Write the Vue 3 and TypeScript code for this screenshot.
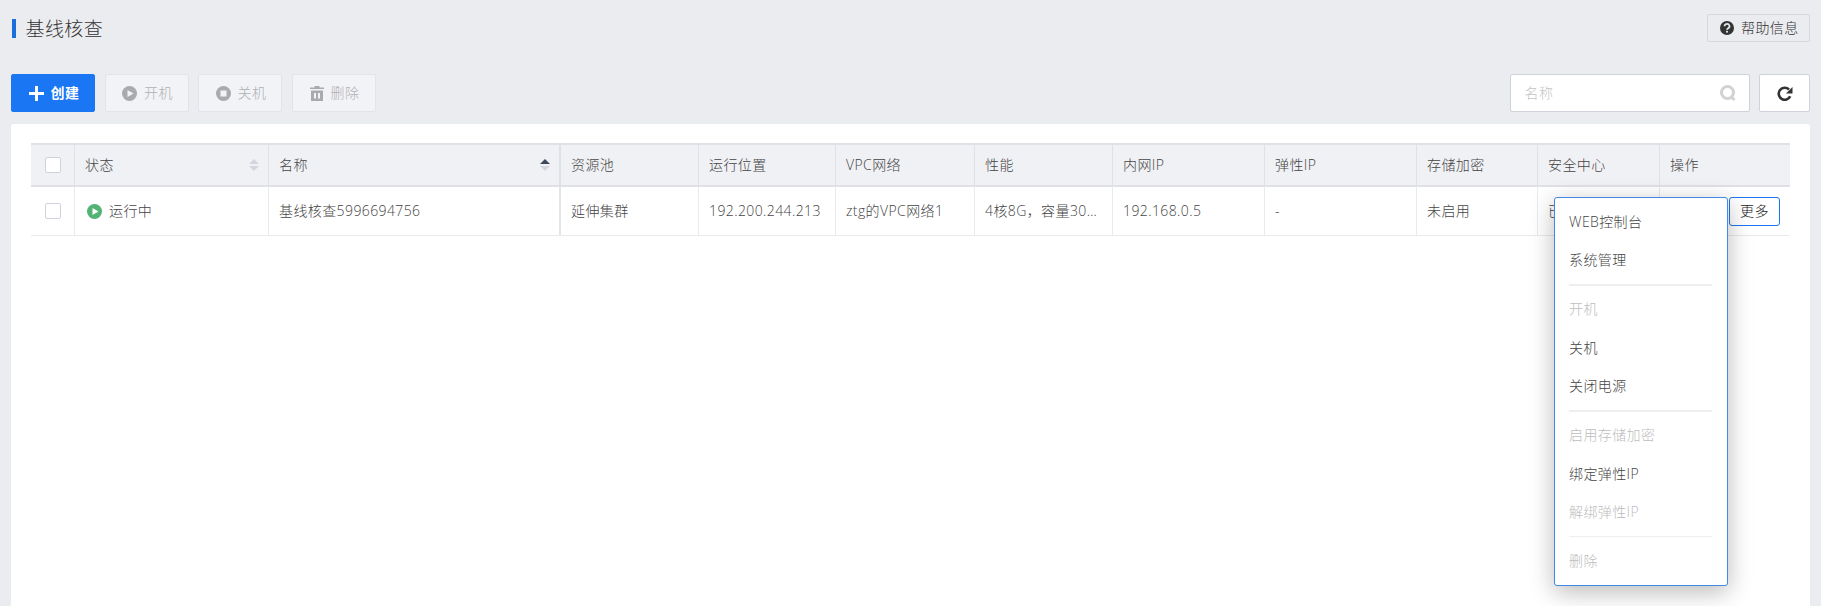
<script setup lang="ts">
interface Column { key: string; label: string; width: number; sort?: 'none' | 'asc'; heavy?: boolean }
const columns: Column[] = [
  { key: 'check', label: '', width: 44 },
  { key: 'status', label: '状态', width: 194, sort: 'none' },
  { key: 'name', label: '名称', width: 292, sort: 'asc', heavy: true },
  { key: 'pool', label: '资源池', width: 138 },
  { key: 'loc', label: '运行位置', width: 137 },
  { key: 'vpc', label: 'VPC网络', width: 139 },
  { key: 'perf', label: '性能', width: 138 },
  { key: 'ip', label: '内网IP', width: 152 },
  { key: 'eip', label: '弹性IP', width: 152 },
  { key: 'enc', label: '存储加密', width: 121 },
  { key: 'sec', label: '安全中心', width: 122 },
  { key: 'op', label: '操作', width: 130 }
]
const row: Record<string, string> = {
  name: '基线核查5996694756', pool: '延伸集群', loc: '192.200.244.213', vpc: 'ztg的VPC网络1',
  perf: '4核8G，容量300G', ip: '192.168.0.5', eip: '-', enc: '未启用', sec: '已开启'
}
type Item = { label: string; disabled?: boolean } | { sep: true }
const menu: Item[] = [
  { label: 'WEB控制台' }, { label: '系统管理' }, { sep: true },
  { label: '开机', disabled: true }, { label: '关机' }, { label: '关闭电源' }, { sep: true },
  { label: '启用存储加密', disabled: true }, { label: '绑定弹性IP' }, { label: '解绑弹性IP', disabled: true }, { sep: true },
  { label: '删除', disabled: true }
]
</script>

<template>
  <div class="page">
    <header class="top">
      <h1 class="title">基线核查</h1>
      <button class="help">
        <svg width="14" height="14" viewBox="0 0 14 14"><circle cx="7" cy="7" r="7" fill="#333"/><path d="M4.500 5.300a2.500 2.300 0 1 1 3.700 2c-.8.500-1.200.9-1.200 1.500" fill="none" stroke="#ebecf0" stroke-width="1.700"/><rect x="6.100" y="9.800" width="1.800" height="1.800" fill="#ebecf0"/></svg>
        <span class="t">帮助信息</span>
      </button>
    </header>
    <div class="toolbar">
      <button class="btn primary">
        <svg width="15" height="15" viewBox="0 0 15 15"><path d="M6 0h3v6h6v3H9v6H6V9H0V6h6z" fill="#fff"/></svg>
        <span class="t">创建</span>
      </button>
      <button class="btn off">
        <svg width="15" height="15" viewBox="0 0 15 15"><circle cx="7.500" cy="7.500" r="7.500" fill="#a9aaad"/><path d="M5.500 4l6 3.500-6 3.500z" fill="#f2f3f6"/></svg>
        <span class="t">开机</span>
      </button>
      <button class="btn off">
        <svg width="15" height="15" viewBox="0 0 15 15"><circle cx="7.500" cy="7.500" r="7.500" fill="#a9aaad"/><rect x="4.500" y="4.500" width="6" height="6" fill="#f2f3f6"/></svg>
        <span class="t">关机</span>
      </button>
      <button class="btn off">
        <svg width="14" height="15" viewBox="0 0 14 15"><path d="M4.500 0h5v1.500H14V3H0V1.500h4.500zM1 4.500h12V15H1zM4 7v5.500h2V7zM8 7v5.500h2V7z" fill="#a9aaad" fill-rule="evenodd"/></svg>
        <span class="t">删除</span>
      </button>
      <div class="spacer"></div>
      <div class="search">
        <span class="ph t">名称</span>
        <svg width="16" height="16" viewBox="0 0 16 16"><circle cx="7.500" cy="7.500" r="6" fill="none" stroke="#d2d2d2" stroke-width="3"/><path d="M11 11.500l3.500 3.500" stroke="#d2d2d2" stroke-width="2.800"/></svg>
      </div>
      <button class="refresh">
        <svg width="16" height="15" viewBox="0 0 16 15"><path d="M13.200 10.200A6 6 0 1 1 12 3.500" fill="none" stroke="#333" stroke-width="2.600"/><path d="M15.500 1v6.500H9z" fill="#333"/></svg>
      </button>
    </div>
    <section class="panel">
      <div class="table">
        <div class="tr head">
          <div v-for="c in columns" :key="c.key" class="cell" :class="{ heavy: c.heavy, chk: c.key === 'check' }" :style="{ width: c.width + 'px' }">
            <span v-if="c.key === 'check'" class="box"></span>
            <span v-else class="t">{{ c.label }}</span>
            <span v-if="c.sort" class="sort" :class="c.sort">
              <i class="up"></i><i class="down"></i>
            </span>
          </div>
        </div>
        <div class="tr body">
          <div v-for="c in columns" :key="c.key" class="cell" :class="{ heavy: c.heavy, chk: c.key === 'check', perf: c.key === 'perf' }" :style="{ width: c.width + 'px' }">
            <span v-if="c.key === 'check'" class="box"></span>
            <span v-else-if="c.key === 'status'" class="status">
              <svg width="15" height="15" viewBox="0 0 15 15"><circle cx="7.500" cy="7.500" r="7.500" fill="#52b374"/><path d="M5.500 4l6 3.500-6 3.500z" fill="#fff"/></svg>
              <span class="t">运行中</span>
            </span>
            <span v-else-if="c.key === 'op'" class="ops">
              <button class="op ghost"></button>
              <button class="op more"><span class="t">更多</span></button>
            </span>
            <span v-else class="t txt">{{ row[c.key] }}</span>
          </div>
        </div>
        <ul class="menu">
          <template v-for="(m, i) in menu" :key="i">
            <li v-if="'sep' in m" class="sep"></li>
            <li v-else class="item" :class="{ dis: m.disabled }">{{ m.label }}</li>
          </template>
        </ul>
      </div>
    </section>
  </div>
</template>

<style>
html, body { margin: 0; background: #ebecf0; }
</style>

<style scoped>
.page { width: 1821px; height: 606px; overflow: hidden; box-sizing: border-box; padding: 14px 11px 0 11px; font: 300 14px "Open Sans", "Noto Sans CJK SC", sans-serif; letter-spacing: .4px; color: #444; background: #ebecf0; }
button { font: inherit; letter-spacing: inherit; padding: 0; box-sizing: border-box; }
.t { display: block; margin-bottom: 2px; }
.top { display: flex; justify-content: space-between; align-items: flex-start; height: 60px; }
.title { margin: 5px 0 0 .5px; height: 19px; border-left: 4.500px solid #1a6fdc; padding-left: 10px; font-size: 19px; font-weight: 300; line-height: 21px; color: #333; }
.help { width: 103px; height: 28px; display: flex; align-items: center; gap: 7px; padding-left: 12px; background: #ebecf0; border: 1px solid #d5d7dd; border-radius: 2px; color: #333; }
.toolbar { display: flex; align-items: center; gap: 9.500px; height: 38px; }
.btn { width: 84px; height: 38px; display: flex; align-items: center; justify-content: center; gap: 7px; padding-left: 2px; border-radius: 2px; }
.primary { background: #1a76f2; border: 1px solid #1a76f2; color: #fff; font-weight: 700; }
.off { background: #f2f3f6; border: 1px solid #e2e4e9; color: #b0b1b4; }
.spacer { flex: 1; }
.search { width: 240px; height: 38px; box-sizing: border-box; display: flex; align-items: center; justify-content: space-between; padding: 0 13px 0 14px; background: #fff; border: 1px solid #d0d2d9; border-radius: 2px; }
.ph { color: #c4c4c4; }
.refresh { width: 51px; height: 38px; display: flex; align-items: center; justify-content: center; background: #fff; border: 1px solid #d0d2d9; border-radius: 2px; }
.panel { margin-top: 12px; height: 482px; background: #fff; border-radius: 3px 3px 0 0; padding: 19px 20px 0 20px; box-sizing: border-box; }
.table { position: relative; width: 1759px; }
.tr { display: flex; }
.head { background: #f0f1f5; border-top: 2px solid #dfe1e7; border-bottom: 2px solid #dfe1e7; height: 40px; }
.body { height: 48px; border-bottom: 1px solid #e8eaee; }
.cell { position: relative; box-sizing: border-box; flex: none; display: flex; align-items: center; padding: 0 10px; border-right: 1px solid #e8eaee; overflow: hidden; white-space: nowrap; }
.head .cell { border-right-color: #dfe1e7; }
.cell:last-child { border-right: 0; }
.heavy { border-right-width: 2px; border-right-color: #e2e4e9; }
.chk { justify-content: center; padding: 0; }
.perf { padding-right: 14px; }
.box { width: 16px; height: 16px; box-sizing: border-box; background: #fff; border: 1px solid #cfd2da; border-radius: 2px; }
.sort { position: absolute; right: 9px; top: 50%; transform: translateY(-50%); display: flex; flex-direction: column; gap: 2px; }
.sort i { width: 0; height: 0; border-left: 5px solid transparent; border-right: 5px solid transparent; }
.up { border-bottom: 5px solid #d3d6dc; }
.down { border-top: 5px solid #d3d6dc; }
.asc .up { border-bottom-color: #3d4a5c; }
.status { display: flex; align-items: center; gap: 7px; margin-left: 2px; }
.txt { overflow: hidden; text-overflow: ellipsis; }
.ops { display: flex; gap: 9px; margin-left: -1px; }
.op { width: 51px; height: 29px; background: #fff; border-radius: 3px; }
.ghost { border: 1px solid #a8bcd6; }
.more { border: 1px solid #1a76f2; color: #222; }
.menu { position: absolute; left: 1523px; top: 54px; width: 174px; box-sizing: border-box; margin: 0; padding: 5px 15px 5px 14px; list-style: none; background: #fff; border: 1px solid #3f8ae6; border-radius: 3px; box-shadow: 0 6px 24px rgba(0, 0, 0, .28); }
.item { height: 38.300px; line-height: 38px; color: #444; }
.dis { color: #bdbdbd; }
.sep { height: 1.500px; margin: 4.700px 0; background: #eee; }
</style>
